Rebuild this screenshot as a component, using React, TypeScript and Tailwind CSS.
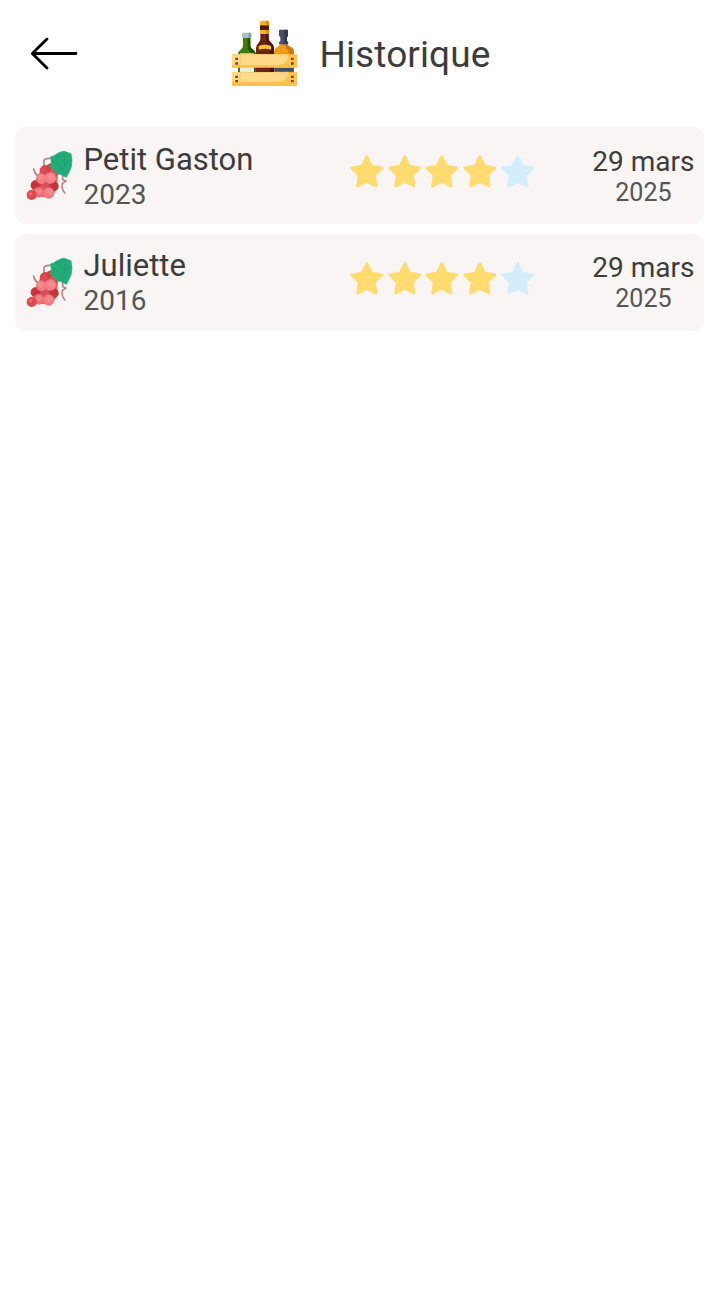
type Entry = { name: string; vintage: string; day: string; year: string; rating: number };

const entries: Entry[] = [
  { name: "Petit Gaston", vintage: "2023", day: "29 mars", year: "2025", rating: 4 },
  { name: "Juliette", vintage: "2016", day: "29 mars", year: "2025", rating: 4 },
];

function BackArrow() {
  return (
    <svg className="h-[60px] w-[70px] shrink-0" viewBox="0 0 70 60" fill="none" stroke="#000" strokeWidth="2.8" strokeLinecap="round" strokeLinejoin="round">
      <path d="M56 28.5H12.5M27 14 12.3 28.5 27 43" />
    </svg>
  );
}

function Crate() {
  return (
    <svg className="size-20 shrink-0" viewBox="0 0 240 240">
      {/* green bottle */}
      <path d="M54 70h22v25q0 6 9 12 7 5 7 14v56H39v-56q0-9 8-14 7-6 7-12z" fill="#3f7d08" />
      <path d="M68 70h8v25q0 6 9 12 7 5 7 14v56H80v-52q0-9-7-14-5-4-5-12z" fill="#245200" />
      <path d="M51 59q0-3 4-3h20q4 0 4 3v11q0 2-3 2H54q-3 0-3-2z" fill="#a8bdcf" />
      <path d="M70 56h5q4 0 4 3v11q0 2-3 2h-6z" fill="#8aa1b5" />
      <path d="M45 118h42v56H45z" fill="#e8f0dc" />
      {/* brown bottle */}
      <path d="M106 58h25v16q0 7 8 13 8 6 8 16v74H93v-74q0-10 7-16 6-6 6-13z" fill="#6b2412" />
      <path d="M123 58h8v16q0 7 8 13 8 6 8 16v74h-12v-72q0-10-7-16-5-5-5-13z" fill="#4b140c" />
      <path d="M105 25q0-5 5-5h17q5 0 5 5v11h-27z" fill="#fbb12d" />
      <path d="M105 34h27v15h-27z" fill="#52180f" />
      <path d="M105 48h27v10q0 2-3 2h-21q-3 0-3-2z" fill="#fbb12d" />
      <path d="M123 20h4q5 0 5 5v9h-9zM123 48h9v12h-9z" fill="#e28c18" />
      <path d="M101 96q19-8 37 0v11q-18-6-37 0z" fill="#ffc033" />
      {/* amber bottle */}
      <path d="M166 88h20q1 8 12 12 9 5 9 15v62h-60v-62q0-10 9-15 9-5 10-12z" fill="#ee991a" />
      <path d="M180 88h6q1 8 12 12 9 5 9 15v62h-16v-60q0-10-7-14-4-4-4-15z" fill="#d5780b" />
      <path d="M162 50q0-3 3-3h21q3 0 3 3v15l-3 5v11l4 5q0 5-5 5h-19q-5 0-5-5l5-5V70l-4-5z" fill="#484f6a" />
      <path d="M178 47h8q3 0 3 3v15l-3 5v11l4 5q0 5-5 5h-7z" fill="#333950" />
      <path d="M148 162h58v11h-58z" fill="#454c65" />
      {/* crate slats */}
      <path d="M21 121h195v40H21z" fill="#ffc14d" />
      <path d="M21 121h169q-1 29-30 32H21z" fill="#ffd987" />
      <path d="M45 121v40M192 121v40" stroke="#fac158" strokeWidth="2" />
      <path d="M21 175h195v41H21z" fill="#ffc14d" />
      <path d="M21 175h169q-1 26-30 29H21z" fill="#ffd987" />
      <path d="M45 175v41M192 175v41" stroke="#fac158" strokeWidth="2" />
      <g fill="#7a4510">
        <path d="M31 131h8v7h-8zM31 145h8v7h-8zM198 131h8v7h-8zM198 145h8v7h-8z" />
        <path d="M31 185h8v7h-8zM31 198h8v7h-8zM198 185h8v7h-8zM198 198h8v7h-8z" />
      </g>
    </svg>
  );
}

function Grapes() {
  return (
    <svg className="size-[60px] shrink-0" viewBox="0 0 180 180">
      <g fill="none" stroke="#bd8580" strokeLinecap="round" strokeLinejoin="round" strokeWidth="5">
        <path d="M72 66V47q1-7 17-7" />
        <path d="M41 72q2 13 14 22" />
        <path d="M128 90v14l10 4-11 7q-3 18 8 29" />
      </g>
      <path d="M62 76 84 58 114 80 112 130 96 156 50 156 36 130 50 100z" fill="#e2666c" />
      <circle cx="76" cy="77" r="17" fill="#dc4850" />
      <circle cx="94" cy="69" r="14" fill="#d63e45" />
      <circle cx="102" cy="84" r="14" fill="#df5257" />
      <circle cx="47" cy="121" r="15" fill="#c6343f" />
      <circle cx="101" cy="124" r="15" fill="#c6353e" />
      <circle cx="75" cy="124" r="13" fill="#d5505a" />
      <circle cx="64" cy="101" r="16" fill="#f07b83" />
      <circle cx="91" cy="99" r="17" fill="#f57f84" />
      <circle cx="56" cy="142" r="16" fill="#ee7077" />
      <circle cx="86" cy="144" r="17" fill="#f47a80" />
      <circle cx="35" cy="150" r="15" fill="#e2474e" />
      <g fill="#ffa0a1" opacity=".45">
        <circle cx="62" cy="98" r="9" />
        <circle cx="95" cy="96" r="10" />
        <circle cx="89" cy="141" r="9" />
        <circle cx="57" cy="139" r="8" />
        <circle cx="32" cy="146" r="5" />
      </g>
      <path d="M91 36q12-3 20-10 12-7 22-7l20 7 3 20-2 20-6 14-9 17-16-8-14-4-8-11-12-9 6-10z" fill="#22ac77" stroke="#22ac77" strokeWidth="2" strokeLinejoin="round" />
      <path d="M93 48q20 1 40 29M108 30q14 8 23 25M137 25q-4 20-4 36M151 47q-14 3-19 20" fill="none" stroke="#1ca070" strokeWidth="3" />
    </svg>
  );
}

function Star({ filled }: { filled: boolean }) {
  return (
    <svg className="h-[34px] w-[37.6px] shrink-0" viewBox="0 0 37.6 34">
      <path
        className={filled ? "fill-[#ffdb70] stroke-[#ffdb70]" : "fill-[#d4edfc] stroke-[#d4edfc]"}
        d="M18.8 2.8 23.4 12.2 33.7 13.9 26.2 21.1 27.9 31.9 18.8 27.1 9.7 31.9 11.4 21.1 3.9 13.9 14.2 12.2Z"
        strokeWidth="3"
        strokeLinejoin="round"
      />
    </svg>
  );
}

function Row({ entry }: { entry: Entry }) {
  return (
    <li className="flex h-[97px] rounded-[11px] bg-[#f9f5f4] pr-[9.5px]">
      <div className="ml-[4.6px] mt-[18px]">
        <Grapes />
      </div>
      <div className="ml-[3.5px] w-[264.7px] pt-[14.75px] text-[#3c3c3c]">
        <div className="text-[31px] leading-9">{entry.name}</div>
        <div className="text-[28px] leading-[34px] text-[#555]">{entry.vintage}</div>
      </div>
      <div className="flex pt-[27px]">
        {[0, 1, 2, 3, 4].map((i) => (
          <Star key={i} filled={i < entry.rating} />
        ))}
      </div>
      <div className="ml-auto pt-[18.75px] text-center text-[#3c3c3c]">
        <div className="text-[28px] leading-8">{entry.day}</div>
        <div className="text-[25px] leading-[30px] text-[#555]">{entry.year}</div>
      </div>
    </li>
  );
}

export default function App() {
  return (
    <main className="min-h-screen bg-white font-[Roboto,sans-serif]">
      <header className="flex h-[127px] items-start">
        <button className="ml-5 mt-[25px]" aria-label="Retour">
          <BackArrow />
        </button>
        <div className="ml-[135px] mt-[14px] flex">
          <Crate />
          <h1 className="ml-[14.5px] mt-[19px] text-[37px] leading-[44px] tracking-[0.1px] text-[#3c3c3c]">Historique</h1>
        </div>
      </header>
      <ul className="ml-[15.4px] mr-5 flex flex-col gap-[9.5px]">
        {entries.map((entry) => (
          <Row key={entry.name} entry={entry} />
        ))}
      </ul>
    </main>
  );
}
